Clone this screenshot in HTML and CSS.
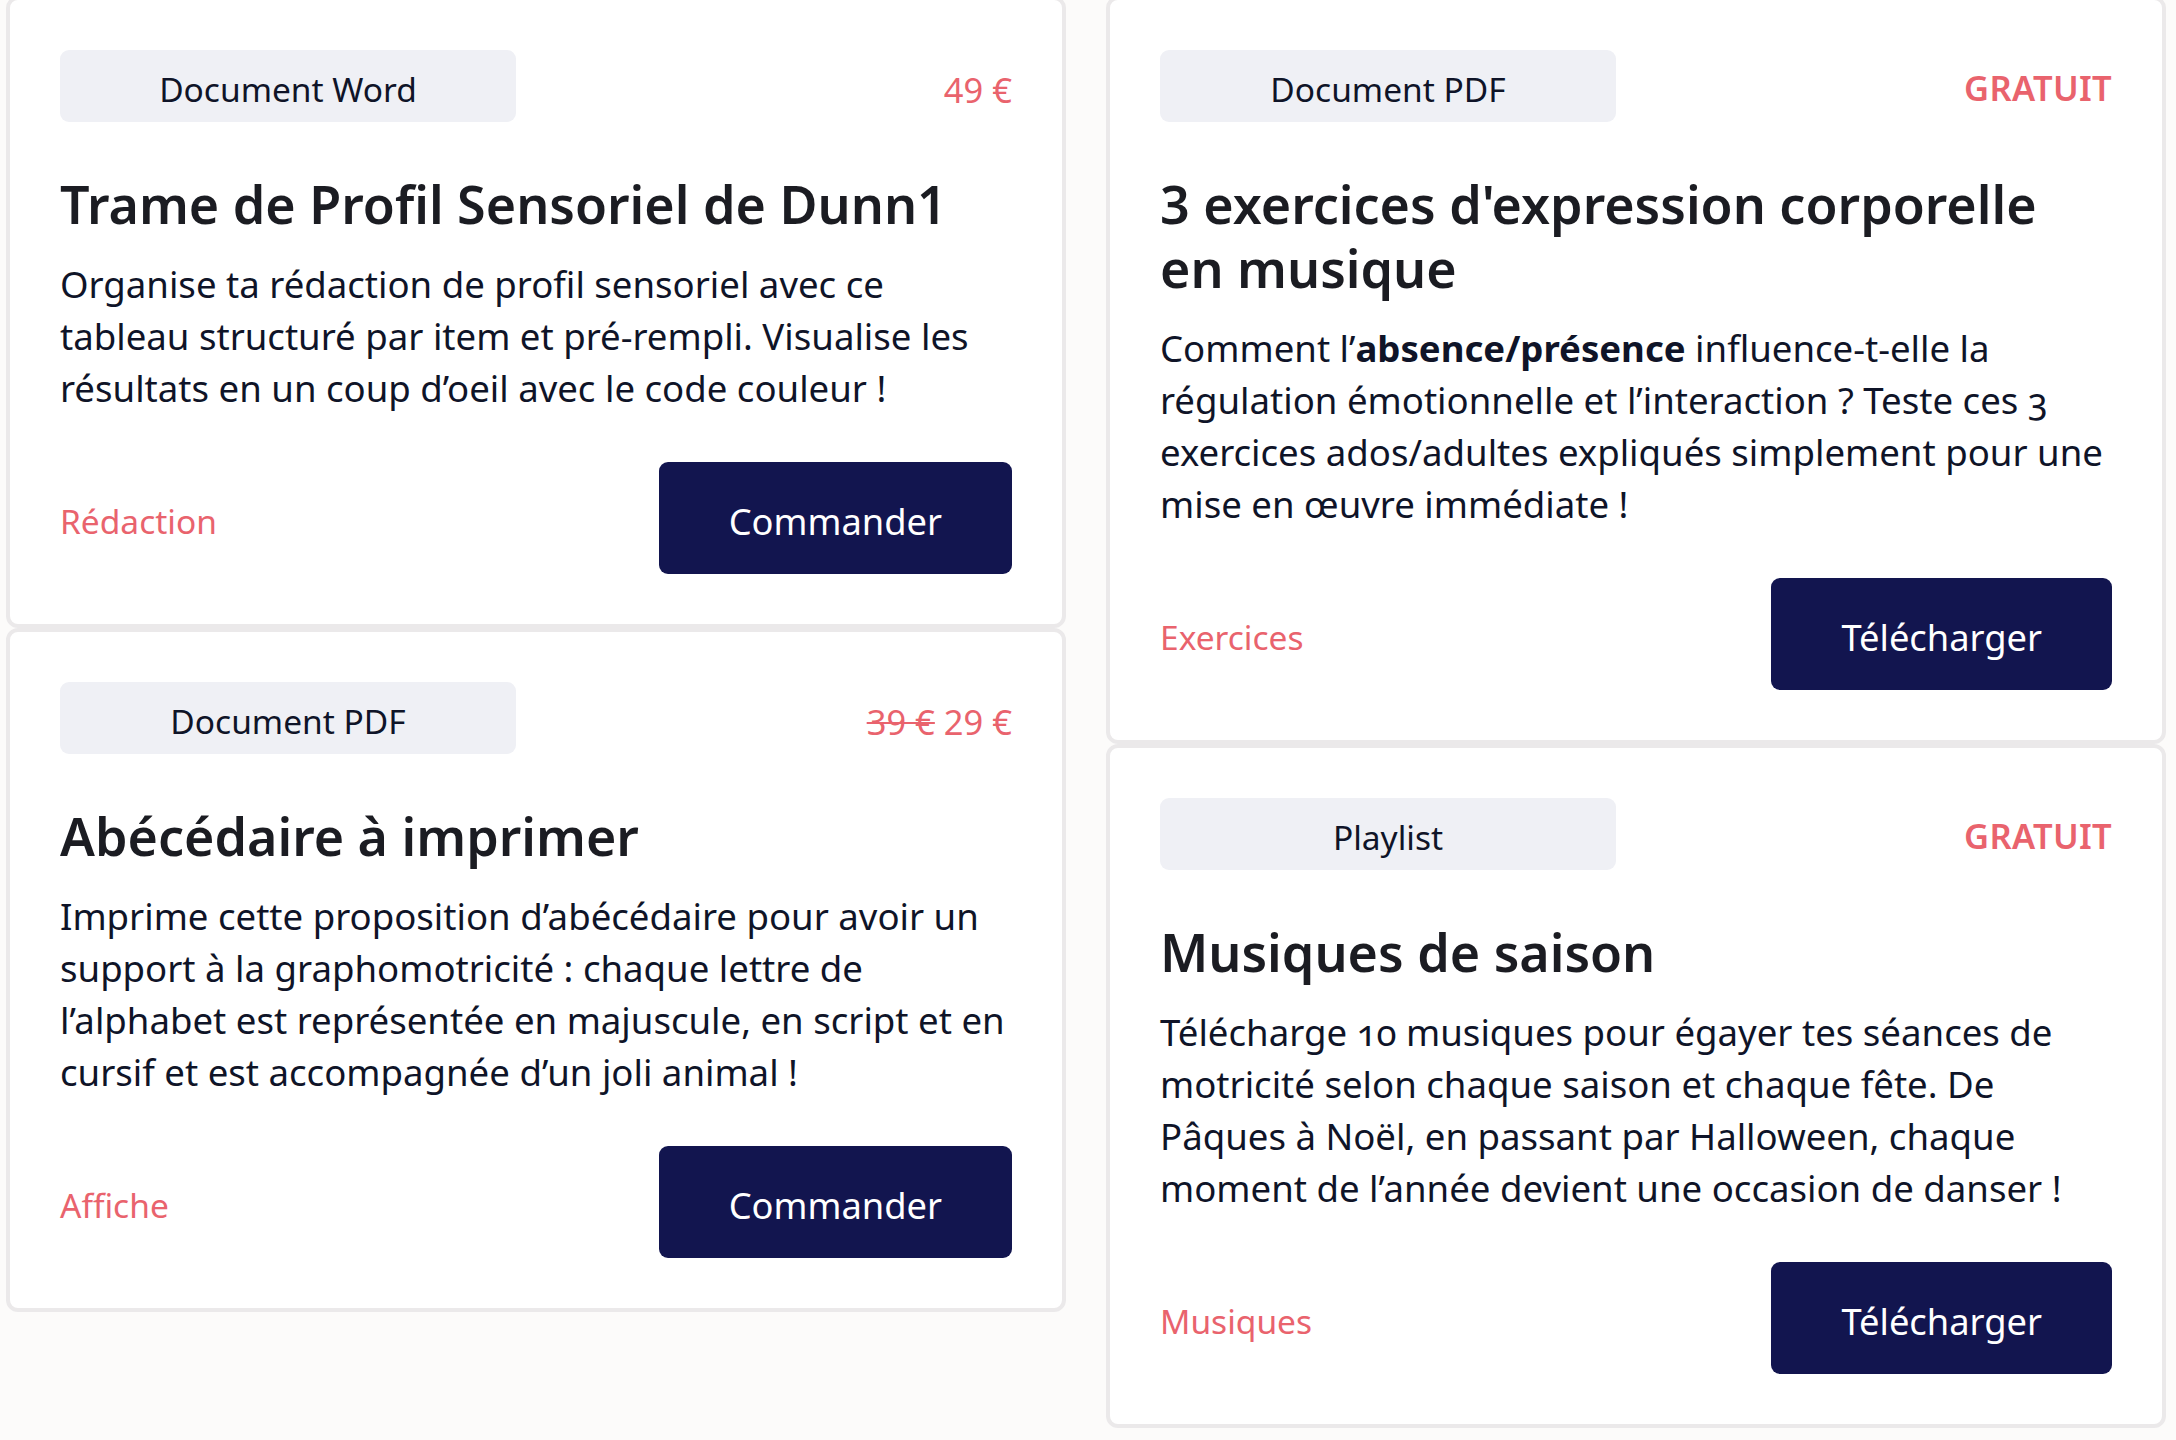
FILE: index.html
```html
<!DOCTYPE html>
<html lang="fr">
<head>
<meta charset="utf-8">
<title>Ressources</title>
<link rel="stylesheet" href="styles.css">
</head>
<body>
<main class="grid">
  <div class="column">
    <article class="card">
      <div class="card-head">
        <span class="pill">Document Word</span>
        <span class="price">49 €</span>
      </div>
      <h2 class="title">Trame de Profil Sensoriel de Dunn1</h2>
      <p class="desc">Organise ta rédaction de profil sensoriel avec ce tableau structuré par item et pré-rempli. Visualise les résultats en un coup d’oeil avec le code couleur !</p>
      <div class="card-foot">
        <span class="tag">Rédaction</span>
        <a class="btn" href="#">Commander</a>
      </div>
    </article>
    <article class="card">
      <div class="card-head">
        <span class="pill">Document PDF</span>
        <span class="price"><s class="old">39 €</s> 29 €</span>
      </div>
      <h2 class="title">Abécédaire à imprimer</h2>
      <p class="desc">Imprime cette proposition d’abécédaire pour avoir un support à la graphomotricité : chaque lettre de l’alphabet est représentée en majuscule, en script et en cursif et est accompagnée d’un joli animal !</p>
      <div class="card-foot">
        <span class="tag">Affiche</span>
        <a class="btn" href="#">Commander</a>
      </div>
    </article>
  </div>
  <div class="column">
    <article class="card">
      <div class="card-head">
        <span class="pill">Document PDF</span>
        <span class="price free">GRATUIT</span>
      </div>
      <h2 class="title">3 exercices d'expression corporelle en musique</h2>
      <p class="desc">Comment l’<strong>absence/présence</strong> influence-t-elle la régulation émotionnelle et l’interaction ? Teste ces 3 exercices ados/adultes expliqués simplement pour une mise en œuvre immédiate !</p>
      <div class="card-foot">
        <span class="tag">Exercices</span>
        <a class="btn" href="#">Télécharger</a>
      </div>
    </article>
    <article class="card">
      <div class="card-head">
        <span class="pill">Playlist</span>
        <span class="price free">GRATUIT</span>
      </div>
      <h2 class="title">Musiques de saison</h2>
      <p class="desc">Télécharge 10 musiques pour égayer tes séances de motricité selon chaque saison et chaque fête. De Pâques à Noël, en passant par Halloween, chaque moment de l’année devient une occasion de danser !</p>
      <div class="card-foot">
        <span class="tag">Musiques</span>
        <a class="btn" href="#">Télécharger</a>
      </div>
    </article>
  </div>
</main>
</body>
</html>
```

FILE: styles.css
```css
* { box-sizing: border-box; }

html, body {
  margin: 0;
  padding: 0;
  background: #fcfbfa;
}

body {
  font-family: "Noto Sans", "Open Sans", sans-serif;
  color: #0f1428;
}

.grid {
  display: flex;
  gap: 40px;
  padding-left: 6px;
  margin-top: -4px;
}

.column {
  width: 1060px;
  display: flex;
  flex-direction: column;
}

.card {
  background: #ffffff;
  border: 4px solid #ebe9ea;
  border-radius: 12px;
  padding: 50px;
}

.card-head {
  display: flex;
  justify-content: space-between;
  align-items: center;
}

.pill {
  width: 456px;
  height: 72px;
  background: #eff0f5;
  border-radius: 9px;
  display: flex;
  align-items: center;
  justify-content: center;
  font-size: 33.5px;
  color: #0f1428;
  padding-top: 6px;
}

.price {
  font-size: 34.5px;
  color: #e9636d;
  padding-top: 7px;
}

.price .old {
  text-decoration: line-through;
  text-decoration-thickness: 2px;
}

.price.free {
  font-weight: 600;
  font-size: 34.5px;
  letter-spacing: 0.3px;
  padding-top: 3px;
}

.title {
  margin: 50px 0 22px;
  font-size: 52px;
  line-height: 64px;
  font-weight: 600;
  color: #1b1c22;
}

.desc {
  margin: 0;
  font-size: 36.6px;
  line-height: 52px;
  font-variant-numeric: oldstyle-nums;
}

.desc strong {
  font-weight: 700;
}

.card-foot {
  display: flex;
  justify-content: space-between;
  align-items: center;
  margin-top: 48px;
}

.tag {
  font-size: 33.5px;
  color: #e9636d;
  padding-top: 5px;
}

.btn {
  height: 112px;
  padding: 5px 70px 0;
  background: #12154f;
  color: #ffffff;
  border-radius: 9px;
  font-size: 36.3px;
  text-decoration: none;
  display: inline-flex;
  align-items: center;
  justify-content: center;
}
```
